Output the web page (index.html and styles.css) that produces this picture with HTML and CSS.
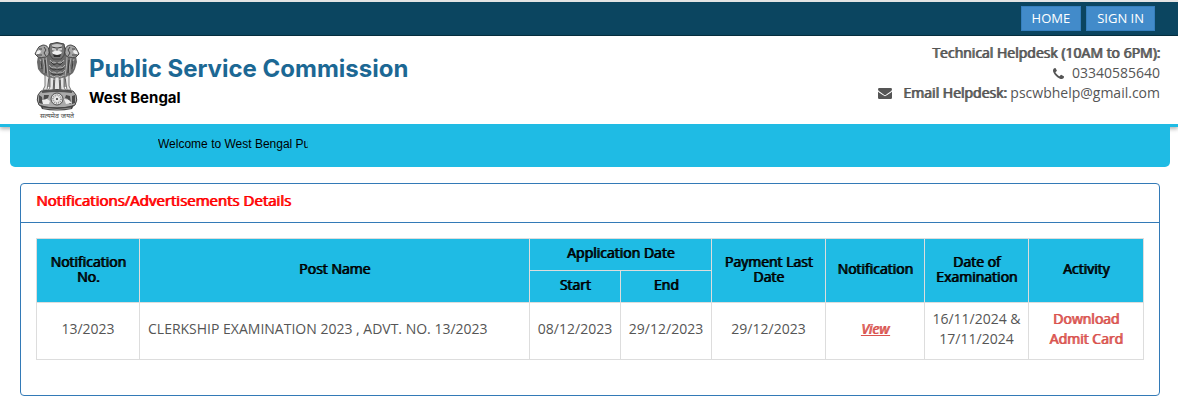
FILE: index.html
```html
<!DOCTYPE html>
<html lang="en">
<head>
<meta charset="utf-8">
<meta name="viewport" content="width=device-width, initial-scale=1">
<title>Public Service Commission, West Bengal</title>
<link rel="stylesheet" href="styles.css">
</head>
<body>
<nav class="topbar">
  <a class="nav-button" href="#">HOME</a>
  <a class="nav-button" href="#">SIGN IN</a>
</nav>
<header class="masthead">
  <div class="brand">
    <svg class="emblem" viewBox="0 0 46 78" aria-hidden="true">
      <!-- manes and bodies -->
      <path d="M4 14 L8 10 L15 10 L18 13 L28 13 L31 10 L38 10 L42 14 L43 20 L41 27 L39 31 L35 34 L31 37 L15 37 L11 34 L7 31 L4 27 L3 20Z" fill="#6a6a6a"/>
      <g fill="none" stroke="#b4b4b4" stroke-width="1">
        <path d="M6 17q2 4 1 9M9 16q2 7 1 15M12 15q1 8 2 19M33 15q0 9-2 19M37 16q-2 7-1 15M40 17q-2 5-1 10"/>
        <path d="M16 18q2 4 4 2 3 3 6 0 2 2 4-2M15 23q3 4 5 2 3 3 6 0 3 2 5-2M15 28q3 4 5 2 3 3 6 0 3 2 5-2M16 33q3 3 7 1 4 2 7-1"/>
      </g>
      <g fill="none" stroke="#3a3a3a" stroke-width="1">
        <path d="M7 19l1 8M11 18l1 13M35 18l-1 13M39 19l-1 8M17 20l3 3 3-2 3 2 3-3M16 26l4 2 3-1 3 1 4-2M17 31l3 2 3-1 3 1 3-2"/>
      </g>
      <!-- side heads -->
      <path d="M3 8Q4 4 9 3Q14 3 15 8Q16 13 12 15Q7 16 4 15L1 12Z" fill="#a5a5a5" stroke="#484848"/>
      <path d="M43 8Q42 4 37 3Q32 3 31 8Q30 13 34 15Q39 16 42 15L45 12Z" fill="#a5a5a5" stroke="#484848"/>
      <path d="M3 9l3-1 1 2-2 2-3 0ZM43 9l-3-1-1 2 2 2 3 0Z" fill="#f0f0f0"/>
      <path d="M5 7l3 0M3 13l5 0M10 5l2 3-2 3 2 3M41 7l-3 0M43 13l-5 0M36 5l-2 3 2 3-2 3" fill="none" stroke="#444"/>
      <!-- front head -->
      <path d="M16 2Q23-1 30 2L31 8Q31 14 27 17L19 17Q15 14 15 8Z" fill="#777" stroke="#444"/>
      <path d="M18 3Q23 1 28 3L28 8L25 9L21 9L18 8Z" fill="#c6c6c6"/>
      <path d="M18 5l4 1M28 5l-4 1M23 5v4" stroke="#333" fill="none"/>
      <path d="M18 10q5-3 10 0l-1 2q-4 2-8 0Z" fill="#eee"/>
      <path d="M19 12q4 2 8 0l-1 3h-6Z" fill="#2f2f2f"/>
      <!-- legs -->
      <path d="M11 33l4 2-2 13h-4l2-4ZM16 35l4 1-1 13h-5l2-4ZM21 35h4l1 14h-6ZM26 36l4-1 0 10 2 4h-5ZM31 35l4-2 0 11 2 4h-4Z" fill="#e4e4e4" stroke="#777"/>
      <path d="M15 37v8M20 38v9M26 38v9M31 37v8" stroke="#444" fill="none"/>
      <!-- abacus -->
      <path d="M7 49Q23 46 39 49L42 53Q44 58 41 63L37 65Q23 67 9 65L5 63Q2 58 4 53Z" fill="#aaa" stroke="#444"/>
      <path d="M8 50Q23 48 38 50" fill="none" stroke="#505050" stroke-width="2"/>
      <path d="M5 53l3 2 1 7-4-1ZM10 53l5 0-1 3-2 1-1 5-2 0ZM32 53l4 1 1 8-2 0-1-5-3-1ZM38 54l3-1 0 8-3 1Z" fill="#4b4b4b"/>
      <path d="M8 58l5-1 3 2-1 3-6 0ZM30 57l5 1 3 3-6 1Z" fill="#eee"/>
      <circle cx="23" cy="57" r="6" fill="#e6e6e6" stroke="#4d4d4d"/>
      <circle cx="23" cy="57" r="4" fill="none" stroke="#969696" stroke-dasharray="1 1" stroke-width="2"/>
      <circle cx="23" cy="57" r="1" fill="#333"/>
      <path d="M6 63Q23 68 40 63L38 67Q23 70 8 67Z" fill="#464646"/>
      <path d="M9 66Q23 69 37 66" fill="none" stroke="#8a8a8a"/>
      <text class="motto" x="23" y="76" text-anchor="middle">सत्यमेव जयते</text>
    </svg>
    <div class="brand-text">
      <h1 class="brand-name">Public Service Commission</h1>
      <p class="brand-state">West Bengal</p>
    </div>
  </div>
  <address class="helpdesk">
    <div><strong>Technical Helpdesk (10AM to 6PM):</strong></div>
    <div class="contact">
      <svg class="phone" viewBox="0 0 11 11" aria-hidden="true"><path fill="currentColor" d="M11 8.7q0 .3-.2 1-.1.4-.9.8-.7.5-1.5.5-.7 0-1.900-.5Q4.700 9.800 3 8 1.200 6.300.5 4.500 0 3.400 0 2.600q0-.8.5-1.600Q.9.300 1.300.2q.7-.2 1-.2.200 0 .5.600l.9 1.700q.2.300.2.500 0 .3-.7.800-.7.500-.7.800 0 .3.700 1.200 1.100 1.500 2.600 2.300.5.300.7.300.3 0 .8-.7.500-.7.800-.7.200 0 .5.200l1.700.9q.7.400.7.600z"/></svg>
      <span>03340585640</span>
    </div>
    <div class="contact">
      <svg class="mail" viewBox="0 0 14 11" aria-hidden="true"><path fill="currentColor" d="M0 3.500Q.4 4 1 4.400l3.800 2.700Q6.300 8.200 7 8.200t2.200-1.100L13 4.400q.6-.4 1-.9v6.200Q14 11 12.700 11H1.300Q0 11 0 9.700zM1.300 0h11.400Q14 0 14 1.200q0 1.300-1.400 2.300L9 6q-1.400 1.200-2 1.200T5 6L1.500 3.600Q0 2.500 0 1.400 0 0 1.300 0z"/></svg>
      <span><strong>Email Helpdesk:</strong> pscwbhelp@gmail.com</span>
    </div>
  </address>
</header>
<div class="ticker">
  <div class="ticker-window">Welcome to West Bengal Public Service Commission</div>
</div>
<main class="panel">
  <h2 class="panel-title">Notifications/Advertisements Details</h2>
  <div class="panel-body">
    <table class="notices">
      <colgroup>
        <col class="col-number"><col><col class="col-date"><col class="col-date">
        <col class="col-payment"><col class="col-notice"><col class="col-exam"><col class="col-activity">
      </colgroup>
      <thead>
        <tr>
          <th rowspan="2">Notification No.</th>
          <th rowspan="2">Post Name</th>
          <th colspan="2">Application Date</th>
          <th rowspan="2">Payment Last Date</th>
          <th rowspan="2">Notification</th>
          <th rowspan="2">Date of Examination</th>
          <th rowspan="2">Activity</th>
        </tr>
        <tr><th>Start</th><th>End</th></tr>
      </thead>
      <tbody>
        <tr>
          <td>13/2023</td>
          <td class="post">CLERKSHIP EXAMINATION 2023 , ADVT. NO. 13/2023</td>
          <td>08/12/2023</td>
          <td>29/12/2023</td>
          <td>29/12/2023</td>
          <td><a class="action view" href="#">View</a></td>
          <td>16/11/2024 &amp; 17/11/2024</td>
          <td><a class="action" href="#">Download<br>Admit Card</a></td>
        </tr>
      </tbody>
    </table>
  </div>
</main>
</body>
</html>
```
FILE: styles.css
```css
* { box-sizing: border-box; }

body {
  margin: 0;
  background: #fff;
  color: #555;
  font: 14px/20px "Open Sans", "Noto Sans", sans-serif;
}

strong, th, .panel-title, .action {
  font-weight: 400;
  text-shadow: 1px 0 0 currentColor;
}

.topbar {
  display: flex;
  justify-content: flex-end;
  gap: 5px;
  padding: 4px 23px 4px 10px;
  border-top: 2px solid #e4e4e4;
  border-bottom: 1px solid #062f40;
  background: #0b4560;
}

.nav-button {
  padding: 1px 10px 2px;
  border: 1px solid #357ebd;
  background: #428bca;
  color: #fff;
  font-size: 13px;
  line-height: 20px;
  text-decoration: none;
}

.masthead {
  display: flex;
  justify-content: space-between;
  padding: 6px 18px 4px 34px;
  border-bottom: 3px solid #1fbbe4;
  box-shadow: 0 2px 4px rgba(0, 0, 0, 0.3);
}

.brand {
  display: flex;
  gap: 9px;
}

.emblem {
  width: 46px;
  height: 78px;
  overflow: visible;
}

.motto {
  font: 7px "Noto Sans Devanagari", "Noto Sans", sans-serif;
  fill: #444;
}

.brand-text {
  padding-top: 12px;
  font-family: "Century Gothic", Inter, sans-serif;
  font-weight: 700;
}

.brand-name {
  margin: 0;
  color: #1c6894;
  font-size: 24px;
  line-height: 30px;
}

.brand-state {
  margin: 4px 0 0;
  color: #000;
  font-size: 15px;
  line-height: 20px;
}

.helpdesk {
  padding-top: 1px;
  font-style: normal;
  text-align: right;
}

.contact {
  display: flex;
  justify-content: flex-end;
  align-items: center;
}

.phone {
  width: 11px;
  height: 11px;
  margin-right: 8px;
}

.mail {
  width: 14px;
  height: 11px;
  margin-right: 11px;
}

.ticker {
  position: relative;
  margin: 0 8px 16px 10px;
  padding: 7px 148px 13px;
  border-radius: 0 0 5px 5px;
  background: #1fbbe4;
}

.ticker-window {
  width: 150px;
  overflow: hidden;
  color: #000;
  font: 12px/20px "Liberation Sans", Arial, sans-serif;
  white-space: nowrap;
}

.panel {
  margin: 0 18px 5px 20px;
  border: 1px solid #337ab7;
  border-radius: 4px;
}

.panel-title {
  margin: 0;
  padding: 6px 15px 12px;
  border-bottom: 1px solid #337ab7;
  color: #f00;
  font-size: 15px;
  line-height: 20px;
}

.panel-body {
  padding: 15px 15px 35px;
}

.notices {
  width: 100%;
  table-layout: fixed;
  border-collapse: collapse;
}

.notices th, .notices td {
  padding: 6px 8px 10px;
  border: 1px solid #ddd;
  text-align: center;
}

.notices th {
  background: #1fbbe4;
  color: #000;
  line-height: 15px;
}

.notices td {
  padding-right: 5px;
  padding-left: 5px;
}

.notices .post {
  padding-left: 8px;
  text-align: left;
}

.col-number { width: 103px; }
.col-date { width: 91px; }
.col-payment { width: 114px; }
.col-notice { width: 99px; }
.col-exam { width: 104px; }
.col-activity { width: 115px; }

.action {
  color: #d9534f;
  text-decoration: none;
}

.view {
  font-style: italic;
  text-decoration: underline;
}
```
